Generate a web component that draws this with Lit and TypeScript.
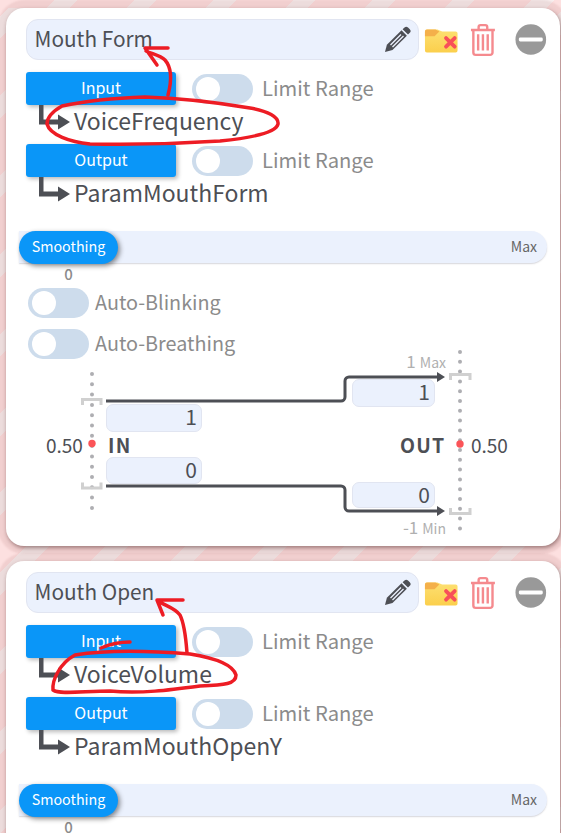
import { LitElement, html, css, svg } from "lit";
import { customElement, property } from "lit/decorators.js";

const FONT = css`"Noto Sans CJK JP", "Noto Sans", sans-serif`;

const bent = svg`<svg class="bent" viewBox="0 0 32 36" width="32" height="36"><path d="M2 0V17H20" fill="none" stroke="#4d4f55" stroke-width="5"/><path d="M19 9.500L31 17L19 24.500Z" fill="#4d4f55"/></svg>`;

@customElement("mouth-card")
class MouthCard extends LitElement {
  @property() name = "";
  @property() inputName = "";
  @property() outputName = "";
  @property({ type: Number }) variant = 0;

  static styles = css`
    :host { display: block; }
    * { box-sizing: border-box; }
    .card { position: relative; height: 538px; background: #fff; border-radius: 18px; padding: 11px 13px 0; box-shadow: 1px 2px 4px rgba(90,50,50,.55), 0 0 2px 8px rgba(140,60,60,.1); font-family: ${FONT}; color: #4d4f55; }
    .head { display: flex; align-items: center; margin-left: 7px; height: 41px; }
    .name { flex: 0 0 393px; height: 41px; border: 1.500px solid #e1e5f1; border-radius: 12px; background: #ebf1fd; display: flex; align-items: center; justify-content: space-between; padding: 0 7px 0 7.500px; font-size: 20.800px; }
    .name span { padding-bottom: 3px; }
    .name svg { display: block; }
    .folder { margin-left: 5px; display: block; }
    .trash { margin-left: 12px; display: block; }
    .minus { margin-left: 20px; display: block; }
    .row { display: flex; align-items: center; margin: 12px 0 0 7px; height: 33px; }
    .row.second { margin-top: 0; }
    .btn { width: 150px; height: 33px; border-radius: 3px; background: #0a96f8; color: #fff; font-size: 16px; display: flex; align-items: center; justify-content: center; box-shadow: 2px 2px 4px rgba(0,0,0,.28); padding: 0 0 3px 0; }
    .toggle { width: 61px; height: 30px; border-radius: 15px; background: #cddcec; position: relative; flex: none; }
    .toggle::after { content: ""; position: absolute; left: 4px; top: 3px; width: 24px; height: 24px; border-radius: 50%; background: #fff; }
    .row .toggle { margin-left: 16px; }
    .lab { color: #8b8b8b; font-size: 20.200px; margin-left: 9px; line-height: 30px; height: 30px; white-space: nowrap; }
    .row .lab { margin-top: -1px; }
    .auto .lab { margin-top: -2px; }
    .target { display: flex; align-items: flex-start; margin-left: 20px; height: 39px; }
    .bent { display: block; flex: none; width: 32px; height: 36px; }
    .tname { font-size: 23px; margin-left: 3px; line-height: 30px; white-space: nowrap; }
    .slider { position: relative; margin: 15px 0 0 0; height: 32px; border-radius: 0 16px 16px 0; background: #ebf1fd; box-shadow: 0 1px 1.500px rgba(70,70,90,.22); display: flex; justify-content: space-between; align-items: center; }
    .thumb { width: 99px; height: 33px; border-radius: 17px; background: #0a96f8; color: #fff; font-size: 14.300px; display: flex; align-items: center; justify-content: center; box-shadow: 2px 2px 5px rgba(0,0,0,.45); padding-bottom: 3px; }
    .max { font-size: 14px; color: #666; margin: 0 10px 3px 0; }
    .zero { width: 99px; text-align: center; font-size: 15px; line-height: 22px; height: 22px; color: #8b8b8b; font-weight: 500; }
    .auto { display: flex; align-items: center; height: 30px; margin: 3px 0 0 9px; }
    .auto + .auto { margin-top: 11px; }
    .auto .lab { margin-left: 6px; font-size: 19.800px; }
    .diagram { position: absolute; left: 0; top: 337px; width: 554px; height: 200px; }
    .diagram svg { position: absolute; inset: 0; }
    .num { position: absolute; border: 1.500px solid #e1e5f1; border-radius: 7px; background: #ebf1fd; height: 28px; text-align: right; font-size: 21px; line-height: 23px; padding-right: 4px; }
    .n1 { left: 100px; top: 59px; width: 96px; }
    .n2 { left: 100px; top: 112px; width: 96px; height: 27px; }
    .n3 { left: 346px; top: 34px; width: 83px; }
    .n4 { left: 346px; top: 137px; width: 83px; height: 26px; }
    .t { position: absolute; white-space: nowrap; line-height: 24px; }
    .v { font-size: 19px; }
    .v1 { left: 40px; top: 88px; }
    .v2 { left: 465px; top: 88px; }
    .bold { font-weight: 700; font-size: 19.500px; letter-spacing: 1.200px; }
    .in { left: 102px; top: 88px; }
    .out { left: 394px; top: 88px; }
    .lim { color: #b0b0b0; font-size: 14px; right: 114px; }
    .lim b { font-weight: 400; font-size: 17px; margin-right: 4px; }
    .mx { top: 4px; }
    .mn { top: 170px; }
    .marks { position: absolute; inset: 0; width: 554px; height: 538px; pointer-events: none; }
  `;

  render() {
    const isA = this.variant === 0;
    const top = isA ? 8 : 561;
    return html`<div class="card">
      <div class="head">
        <div class="name"><span>${this.name}</span>
          <svg width="27" height="27" viewBox="0 0 27 27"><path d="M20.500 1.500a2.500 2.500 0 0 1 3.500 0l1.800 1.800a2.500 2.500 0 0 1 0 3.500L24 8.600 18.600 3.200Z" fill="#4d4f55"/><path d="M17.500 4.300 22.900 9.700 8.500 24.100 1 26 2.900 18.700Z" fill="#4d4f55"/><path d="M17 8.500 6.500 19M19.500 10 8.500 21" stroke="#ebf1fd" stroke-width="1.300"/></svg>
        </div>
        <svg class="folder" width="35" height="28" viewBox="0 0 35 28"><defs><linearGradient id="fg" x1="0" y1="0" x2="0" y2="1"><stop offset="0" stop-color="#fde072"/><stop offset="1" stop-color="#fbcf4c"/></linearGradient></defs><path d="M1 5a2 2 0 0 1 2-2h11l5 2h14a2 2 0 0 1 2 2v18a2 2 0 0 1-2 2H3a2 2 0 0 1-2-2Z" fill="url(#fg)"/><path d="M1 5a2 2 0 0 1 2-2h9l4 2-5 5H1Z" fill="#f4b04a"/><path d="M23 12l9 9M32 12 23 21" stroke="#f8505a" stroke-width="4" stroke-linecap="round"/></svg>
        <svg class="trash" width="27" height="34" viewBox="0 0 27 34"><g fill="none" stroke="#f58a8e" stroke-width="2.500"><path d="M1 6.500H26M9 6.500V3.500a2 2 0 0 1 2-2h5a2 2 0 0 1 2 2v3"/><path d="M3.500 7V30a2.500 2.500 0 0 0 2.500 2.500H21a2.500 2.500 0 0 0 2.500-2.500V7"/><path d="M8.500 11V28M13.500 11V28M18.500 11V28"/></g></svg>
        <svg class="minus" width="33" height="33" viewBox="0 0 33 33"><circle cx="16.500" cy="16.500" r="16" fill="#999"/><rect x="4" y="14.500" width="25" height="4" rx="1.500" fill="#fff"/></svg>
      </div>
      <div class="row"><div class="btn">Input</div><div class="toggle"></div><span class="lab">Limit Range</span></div>
      <div class="target">${bent}<span class="tname">${this.inputName}</span></div>
      <div class="row second"><div class="btn">Output</div><div class="toggle"></div><span class="lab">Limit Range</span></div>
      <div class="target">${bent}<span class="tname">${this.outputName}</span></div>
      <div class="slider"><div class="thumb">Smoothing</div><span class="max">Max</span></div>
      <div class="zero">0</div>
      <div class="auto"><div class="toggle"></div><span class="lab">Auto-Blinking</span></div>
      <div class="auto"><div class="toggle"></div><span class="lab">Auto-Breathing</span></div>
      <div class="diagram">
        <svg width="554" height="200" viewBox="6 345 554 200">
          <path d="M92 374V514" stroke="#aeaeb2" stroke-width="4" stroke-linecap="round" stroke-dasharray="0 10.300" fill="none"/>
          <path d="M460 352V538" stroke="#aeaeb2" stroke-width="4" stroke-linecap="round" stroke-dasharray="0 9.800" fill="none"/>
          <g fill="none" stroke="#d0d0d0" stroke-width="3">
            <path d="M82.500 405V399.500H101V405M82.500 482.500V488H101V482.500"/>
            <path d="M450.500 380V374.500H470V380M450.500 508V513.500H470V508"/>
          </g>
          <g fill="none" stroke="#4d4f55" stroke-width="3" stroke-linejoin="round">
            <path d="M106 401H341a4 4 0 0 0 4-4V381a4 4 0 0 1 4-4H438"/>
            <path d="M106 486H341a4 4 0 0 1 4 4V507a4 4 0 0 0 4 4H438"/>
          </g>
          <path d="M437 372 445 377 437 382ZM437 506 445 511 437 516Z" fill="#4d4f55"/>
          <circle cx="92" cy="443.500" r="3.700" fill="#fb5458"/>
          <circle cx="460" cy="444" r="3.700" fill="#fb5458"/>
        </svg>
        <div class="num n1">1</div><div class="num n2">0</div><div class="num n3">1</div><div class="num n4">0</div>
        <span class="t v v1">0.50</span><span class="t v v2">0.50</span>
        <span class="t bold in">IN</span><span class="t bold out">OUT</span>
        <span class="t lim mx"><b>1</b>Max</span><span class="t lim mn"><b>-1</b>Min</span>
      </div>
      <svg class="marks" viewBox="6 ${top} 554 538" fill="none" stroke="#ed1c24" stroke-width="3.500" stroke-linecap="round" stroke-linejoin="round">
        ${isA
          ? svg`<path d="M168 95C172 80 172 68 165 60C160 55 152 54 146 51M168 48H145L157 65"/>
                <path d="M62 106C90 100 115 98 145 97C180 98 220 103 250 108C268 111 279 117 278 124C276 133 250 138 220 141C190 143 140 145 90 144C70 142 50 135 47 124C47 116 55 110 62 106Z"/>`
          : svg`<path d="M187 653C186 640 185 625 180 615C175 608 166 606 160 602M183 600H157L163 615"/>
                <path d="M101 648C110 644 120 642 130 642M75 655C100 651 140 650 190 654C215 658 233 665 236 675C236 684 225 685 200 686C170 690 140 694 110 691C85 691 60 695 53 690C52 680 60 663 75 655Z"/>`}
      </svg>
    </div>`;
  }
}

@customElement("app-root")
class AppRoot extends LitElement {
  static styles = css`
    :host {
      display: block; height: 833px; overflow: hidden;
      background:
        repeating-linear-gradient(135deg, #fde0e0 0 38.700px, #f8efef 38.700px 54.700px, #fde0e0 54.700px 56.200px) 0 0 / 100% 8px no-repeat,
        repeating-linear-gradient(135deg, #fde0e0 0 11.400px, #f8efef 11.400px 27.400px, #fde0e0 27.400px 56.200px);
    }
    .page { display: flex; flex-direction: column; gap: 15px; padding: 8px 1px 0 6px; }
  `;
  render() {
    return html`<div class="page">
      <mouth-card name="Mouth Form" inputName="VoiceFrequency" outputName="ParamMouthForm" .variant=${0}></mouth-card>
      <mouth-card name="Mouth Open" inputName="VoiceVolume" outputName="ParamMouthOpenY" .variant=${1}></mouth-card>
    </div>`;
  }
}
